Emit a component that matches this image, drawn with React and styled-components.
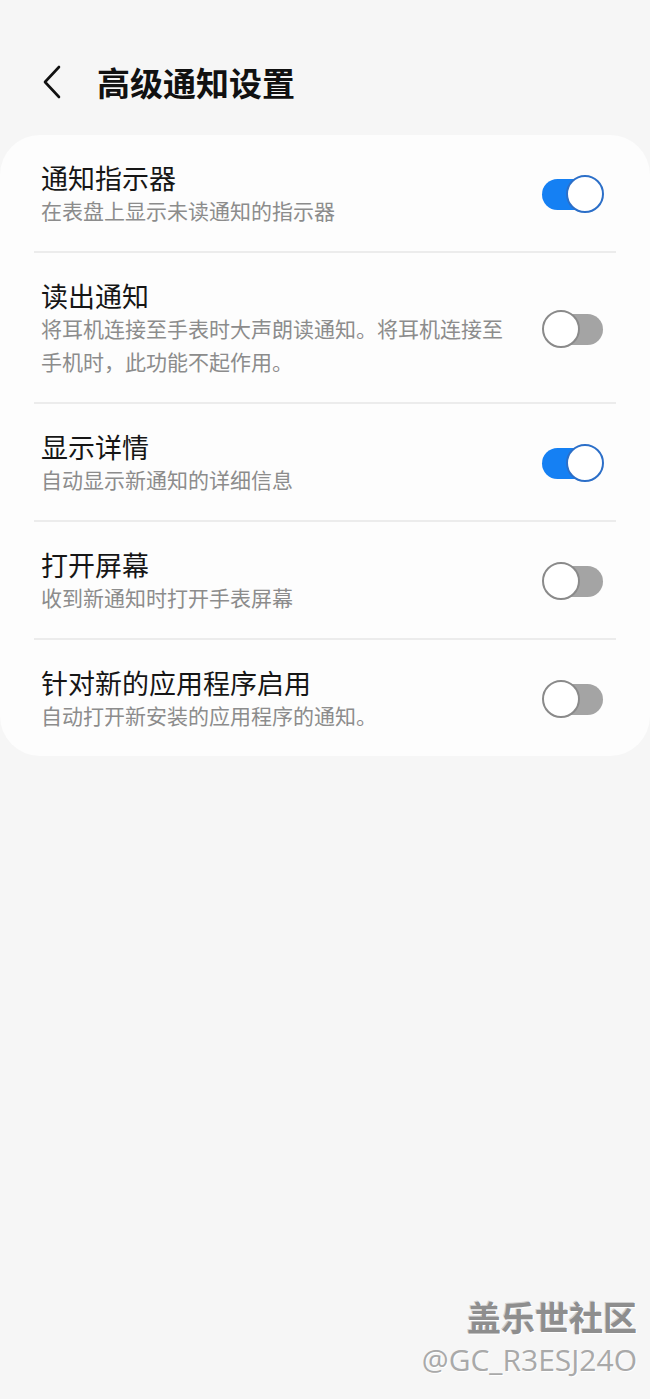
import React from "react";
import styled, { createGlobalStyle } from "styled-components";

const GlobalStyle = createGlobalStyle`
	html, body {
		margin: 0;
		padding: 0;
		background: #f6f6f6;
	}
	* {
		box-sizing: border-box;
	}
`;

const Page = styled.div`
	position: relative;
	min-height: 1399px;
	padding-top: 50px;
	font-family: "Noto Sans CJK SC", "Noto Sans", sans-serif;
	background: #f6f6f6;
`;

const Header = styled.div`
	display: flex;
	align-items: center;
	height: 64px;
	padding-left: 42px;
`;

const BackIcon = styled.svg`
	width: 20px;
	height: 34px;
	margin-right: 35px;
`;

const Title = styled.h1`
	margin: 0;
	font-size: 33px;
	font-weight: 700;
	line-height: 1;
	color: #111;
`;

const Card = styled.div`
	margin-top: 21px;
	padding: 0 34px;
	background: #fdfdfd;
	border-radius: 40px;
`;

const Row = styled.div`
	display: flex;
	align-items: center;
	justify-content: space-between;
	padding: 26px 12px 24px 7px;
	border-bottom: ${(p) => (p.$last ? "none" : "2px solid #ececec")};
`;

const TextBlock = styled.div`
	max-width: 472px;
`;

const RowTitle = styled.div`
	font-size: 27px;
	line-height: 33px;
	color: #161616;
`;

const RowSub = styled.div`
	font-size: 21px;
	line-height: 33px;
	color: #8c8c8c;
`;

const Switch = styled.div`
	position: relative;
	flex-shrink: 0;
	width: 62px;
	height: 38px;
`;

const Track = styled.div`
	position: absolute;
	top: 4px;
	left: ${(p) => (p.$on ? "0" : "14px")};
	width: ${(p) => (p.$on ? "58px" : "47px")};
	height: 31px;
	border-radius: 16px;
	background: ${(p) => (p.$on ? "#1580f3" : "#a4a4a4")};
`;

const Thumb = styled.div`
	position: absolute;
	top: 0;
	left: ${(p) => (p.$on ? "24px" : "0")};
	width: 38px;
	height: 38px;
	border-radius: 50%;
	background: #fff;
	border: 2px solid ${(p) => (p.$on ? "#2c6fc8" : "#8a8a8a")};
`;

const Watermark = styled.div`
	position: absolute;
	right: 13px;
	bottom: 22px;
	display: flex;
	flex-direction: column;
	align-items: flex-end;
`;

const MarkTitle = styled.div`
	font-size: 34px;
	font-weight: 700;
	line-height: 40px;
	color: #8e8e8e;
	text-shadow: 1px 1px 0 #fff, -1px -1px 0 #cfcfcf;
`;

const MarkId = styled.div`
	margin-top: 6px;
	font-family: "Open Sans", "Liberation Sans", sans-serif;
	font-size: 30px;
	line-height: 34px;
	color: #a9a9a9;
	text-shadow: 1px 1px 0 #fff;
`;

const settings = [
	{ title: "通知指示器", sub: "在表盘上显示未读通知的指示器", on: true },
	{
		title: "读出通知",
		sub: "将耳机连接至手表时大声朗读通知。将耳机连接至手机时，此功能不起作用。",
		on: false,
	},
	{ title: "显示详情", sub: "自动显示新通知的详细信息", on: true },
	{ title: "打开屏幕", sub: "收到新通知时打开手表屏幕", on: false },
	{ title: "针对新的应用程序启用", sub: "自动打开新安装的应用程序的通知。", on: false },
];

const Toggle = ({ on }) => (
	<Switch>
		<Track $on={on} />
		<Thumb $on={on} />
	</Switch>
);

const App = () => {
	return (
		<Page>
			<GlobalStyle />
			<Header>
				<BackIcon viewBox="0 0 20 34">
					<path d="M17 2 L3 17 L17 32" fill="none" stroke="#111" strokeWidth="2.6" strokeLinecap="round" strokeLinejoin="round" />
				</BackIcon>
				<Title>高级通知设置</Title>
			</Header>
			<Card>
				{settings.map((s, i) => (
					<Row key={s.title} $last={i === settings.length - 1}>
						<TextBlock>
							<RowTitle>{s.title}</RowTitle>
							<RowSub>{s.sub}</RowSub>
						</TextBlock>
						<Toggle on={s.on} />
					</Row>
				))}
			</Card>
			<Watermark>
				<MarkTitle>盖乐世社区</MarkTitle>
				<MarkId>@GC_R3ESJ24O</MarkId>
			</Watermark>
		</Page>
	);
};

export default App;
